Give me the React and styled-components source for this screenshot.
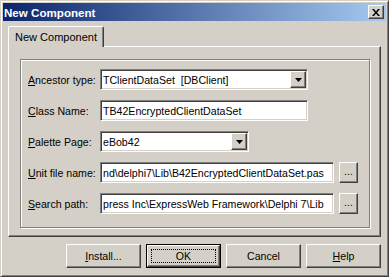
import React from "react";
import styled, { createGlobalStyle } from "styled-components";

const GlobalStyle = createGlobalStyle`
  html, body {
    margin: 0;
    padding: 0;
    background: #d4d0c8;
  }
  body {
    font-family: "Liberation Sans", Arial, sans-serif;
    font-size: 10.6px;
    color: #000;
  }
`;

const Window = styled.div`
  box-sizing: border-box;
  width: 389px;
  height: 277px;
  background: #d4d0c8;
  border: 1px solid;
  border-color: #d4d0c8 #404040 #404040 #d4d0c8;
  box-shadow: inset 1px 1px #fff, inset -1px -1px #808080;
  padding: 2px;
  display: flex;
  flex-direction: column;
`;

const TitleBar = styled.div`
  height: 18px;
  display: flex;
  align-items: center;
  justify-content: space-between;
  padding: 0 2px 0 1px;
  background: linear-gradient(to right, #0a246a, #a6caf0);
  color: #fff;
  font-weight: bold;
  font-size: 11.6px;
`;

const raised = `
  box-sizing: border-box;
  background: #d4d0c8;
  border: 1px solid;
  border-color: #fff #404040 #404040 #fff;
  box-shadow: inset -1px -1px #808080, inset 1px 1px #d4d0c8;
`;

const CloseButton = styled.div`
  ${raised}
  width: 16px;
  height: 14px;
  display: flex;
  align-items: center;
  justify-content: center;
`;

const Body = styled.div`
  flex: 1;
  display: flex;
  flex-direction: column;
  padding: 5px 5px 6px;
`;

const TabStrip = styled.div`
  height: 20px;
  display: flex;
  align-items: flex-end;
  position: relative;
  z-index: 1;
`;

const Tab = styled.div`
  box-sizing: border-box;
  width: 96px;
  height: 21px;
  margin-bottom: -1px;
  background: #d4d0c8;
  border: 1px solid;
  border-bottom: none;
  border-color: #fff #404040 transparent #fff;
  border-radius: 2px 2px 0 0;
  box-shadow: inset -1px 0 #808080;
  display: flex;
  align-items: center;
  justify-content: center;
  padding-bottom: 1px;
  font-size: 11px;
`;

const Panel = styled.div`
  box-sizing: border-box;
  height: 191px;
  border: 1px solid;
  border-color: #fff #404040 #404040 #fff;
  box-shadow: inset -1px -1px #808080;
  padding: 12px 10px 8px 11px;
  display: flex;
`;

const GroupBox = styled.div`
  flex: 1;
  border: 1px solid #808080;
  box-shadow: inset 1px 1px #fff, 1px 1px #fff;
  padding: 9px 0 0 7px;
  display: flex;
  flex-direction: column;
  gap: 10px;
`;

const Row = styled.div`
  display: flex;
  align-items: center;
  height: 21px;
`;

const Label = styled.div`
  width: 72px;
  white-space: nowrap;
`;

const Key = styled.span`
  text-decoration: underline;
`;

const Edit = styled.div`
  box-sizing: border-box;
  width: ${(p) => p.$w}px;
  height: 21px;
  background: #fff;
  border: 1px solid;
  border-color: #808080 #fff #fff #808080;
  box-shadow: inset 1px 1px #404040, inset -1px -1px #d4d0c8;
  padding: 0 2px 0 2px;
  display: flex;
  align-items: center;
  white-space: pre;
  overflow: hidden;
`;

const EditText = styled.span`
  flex: 1;
  overflow: hidden;
`;

const ComboButton = styled.div`
  ${raised}
  width: 16px;
  height: 17px;
  margin-right: -1px;
  display: flex;
  align-items: center;
  justify-content: center;
`;

const BrowseButton = styled.div`
  ${raised}
  width: 19px;
  height: 21px;
  margin-left: 5px;
  display: flex;
  align-items: center;
  justify-content: center;
  padding-bottom: 3px;
`;

const ButtonRow = styled.div`
  display: flex;
  justify-content: flex-end;
  gap: 5px;
  margin-top: 7px;
`;

const Button = styled.div`
  ${raised}
  width: 75px;
  height: 24px;
  display: flex;
  align-items: center;
  justify-content: center;
`;

const DefaultButton = styled.div`
  box-sizing: border-box;
  width: 75px;
  height: 24px;
  border: 1px solid #000;
  display: flex;
`;

const DefaultInner = styled.div`
  ${raised}
  flex: 1;
  padding: 3px;
  display: flex;
`;

const Focus = styled.div`
  flex: 1;
  outline: 1px dotted #000;
  outline-offset: -1px;
  display: flex;
  align-items: center;
  justify-content: center;
`;

const Arrow = () => (
  <svg width="7" height="4" viewBox="0 0 7 4">
    <path d="M0 0h7L3.5 4z" fill="#000" />
  </svg>
);

const CloseIcon = () => (
  <svg width="8" height="7" viewBox="0 0 8 7">
    <path
      d="M0 0h2l2 2.5L6 0h2L5 3.5 8 7H6L4 4.5 2 7H0l3-3.5z"
      fill="#000"
    />
  </svg>
);

const Combo = ({ w, children }) => (
  <Edit $w={w}>
    <EditText>{children}</EditText>
    <ComboButton>
      <Arrow />
    </ComboButton>
  </Edit>
);

export default function App() {
  return (
    <>
      <GlobalStyle />
      <Window>
        <TitleBar>
          <span>New Component</span>
          <CloseButton>
            <CloseIcon />
          </CloseButton>
        </TitleBar>
        <Body>
          <TabStrip>
            <Tab>New Component</Tab>
          </TabStrip>
          <Panel>
            <GroupBox>
              <Row>
                <Label>
                  <Key>A</Key>ncestor type:
                </Label>
                <Combo w={208}>TClientDataSet  [DBClient]</Combo>
              </Row>
              <Row>
                <Label>
                  <Key>C</Key>lass Name:
                </Label>
                <Edit $w={208}>TB42EncryptedClientDataSet</Edit>
              </Row>
              <Row>
                <Label>
                  <Key>P</Key>alette Page:
                </Label>
                <Combo w={149}>eBob42</Combo>
              </Row>
              <Row>
                <Label>
                  <Key>U</Key>nit file name:
                </Label>
                <Edit $w={234}>nd\delphi7\Lib\B42EncryptedClientDataSet.pas</Edit>
                <BrowseButton>...</BrowseButton>
              </Row>
              <Row>
                <Label>
                  <Key>S</Key>earch path:
                </Label>
                <Edit $w={234}>press Inc\ExpressWeb Framework\Delphi 7\Lib</Edit>
                <BrowseButton>...</BrowseButton>
              </Row>
            </GroupBox>
          </Panel>
          <ButtonRow>
            <Button>
              <span>
                <Key>I</Key>nstall...
              </span>
            </Button>
            <DefaultButton>
              <DefaultInner>
                <Focus>OK</Focus>
              </DefaultInner>
            </DefaultButton>
            <Button>Cancel</Button>
            <Button>
              <span>
                <Key>H</Key>elp
              </span>
            </Button>
          </ButtonRow>
        </Body>
      </Window>
    </>
  );
}
